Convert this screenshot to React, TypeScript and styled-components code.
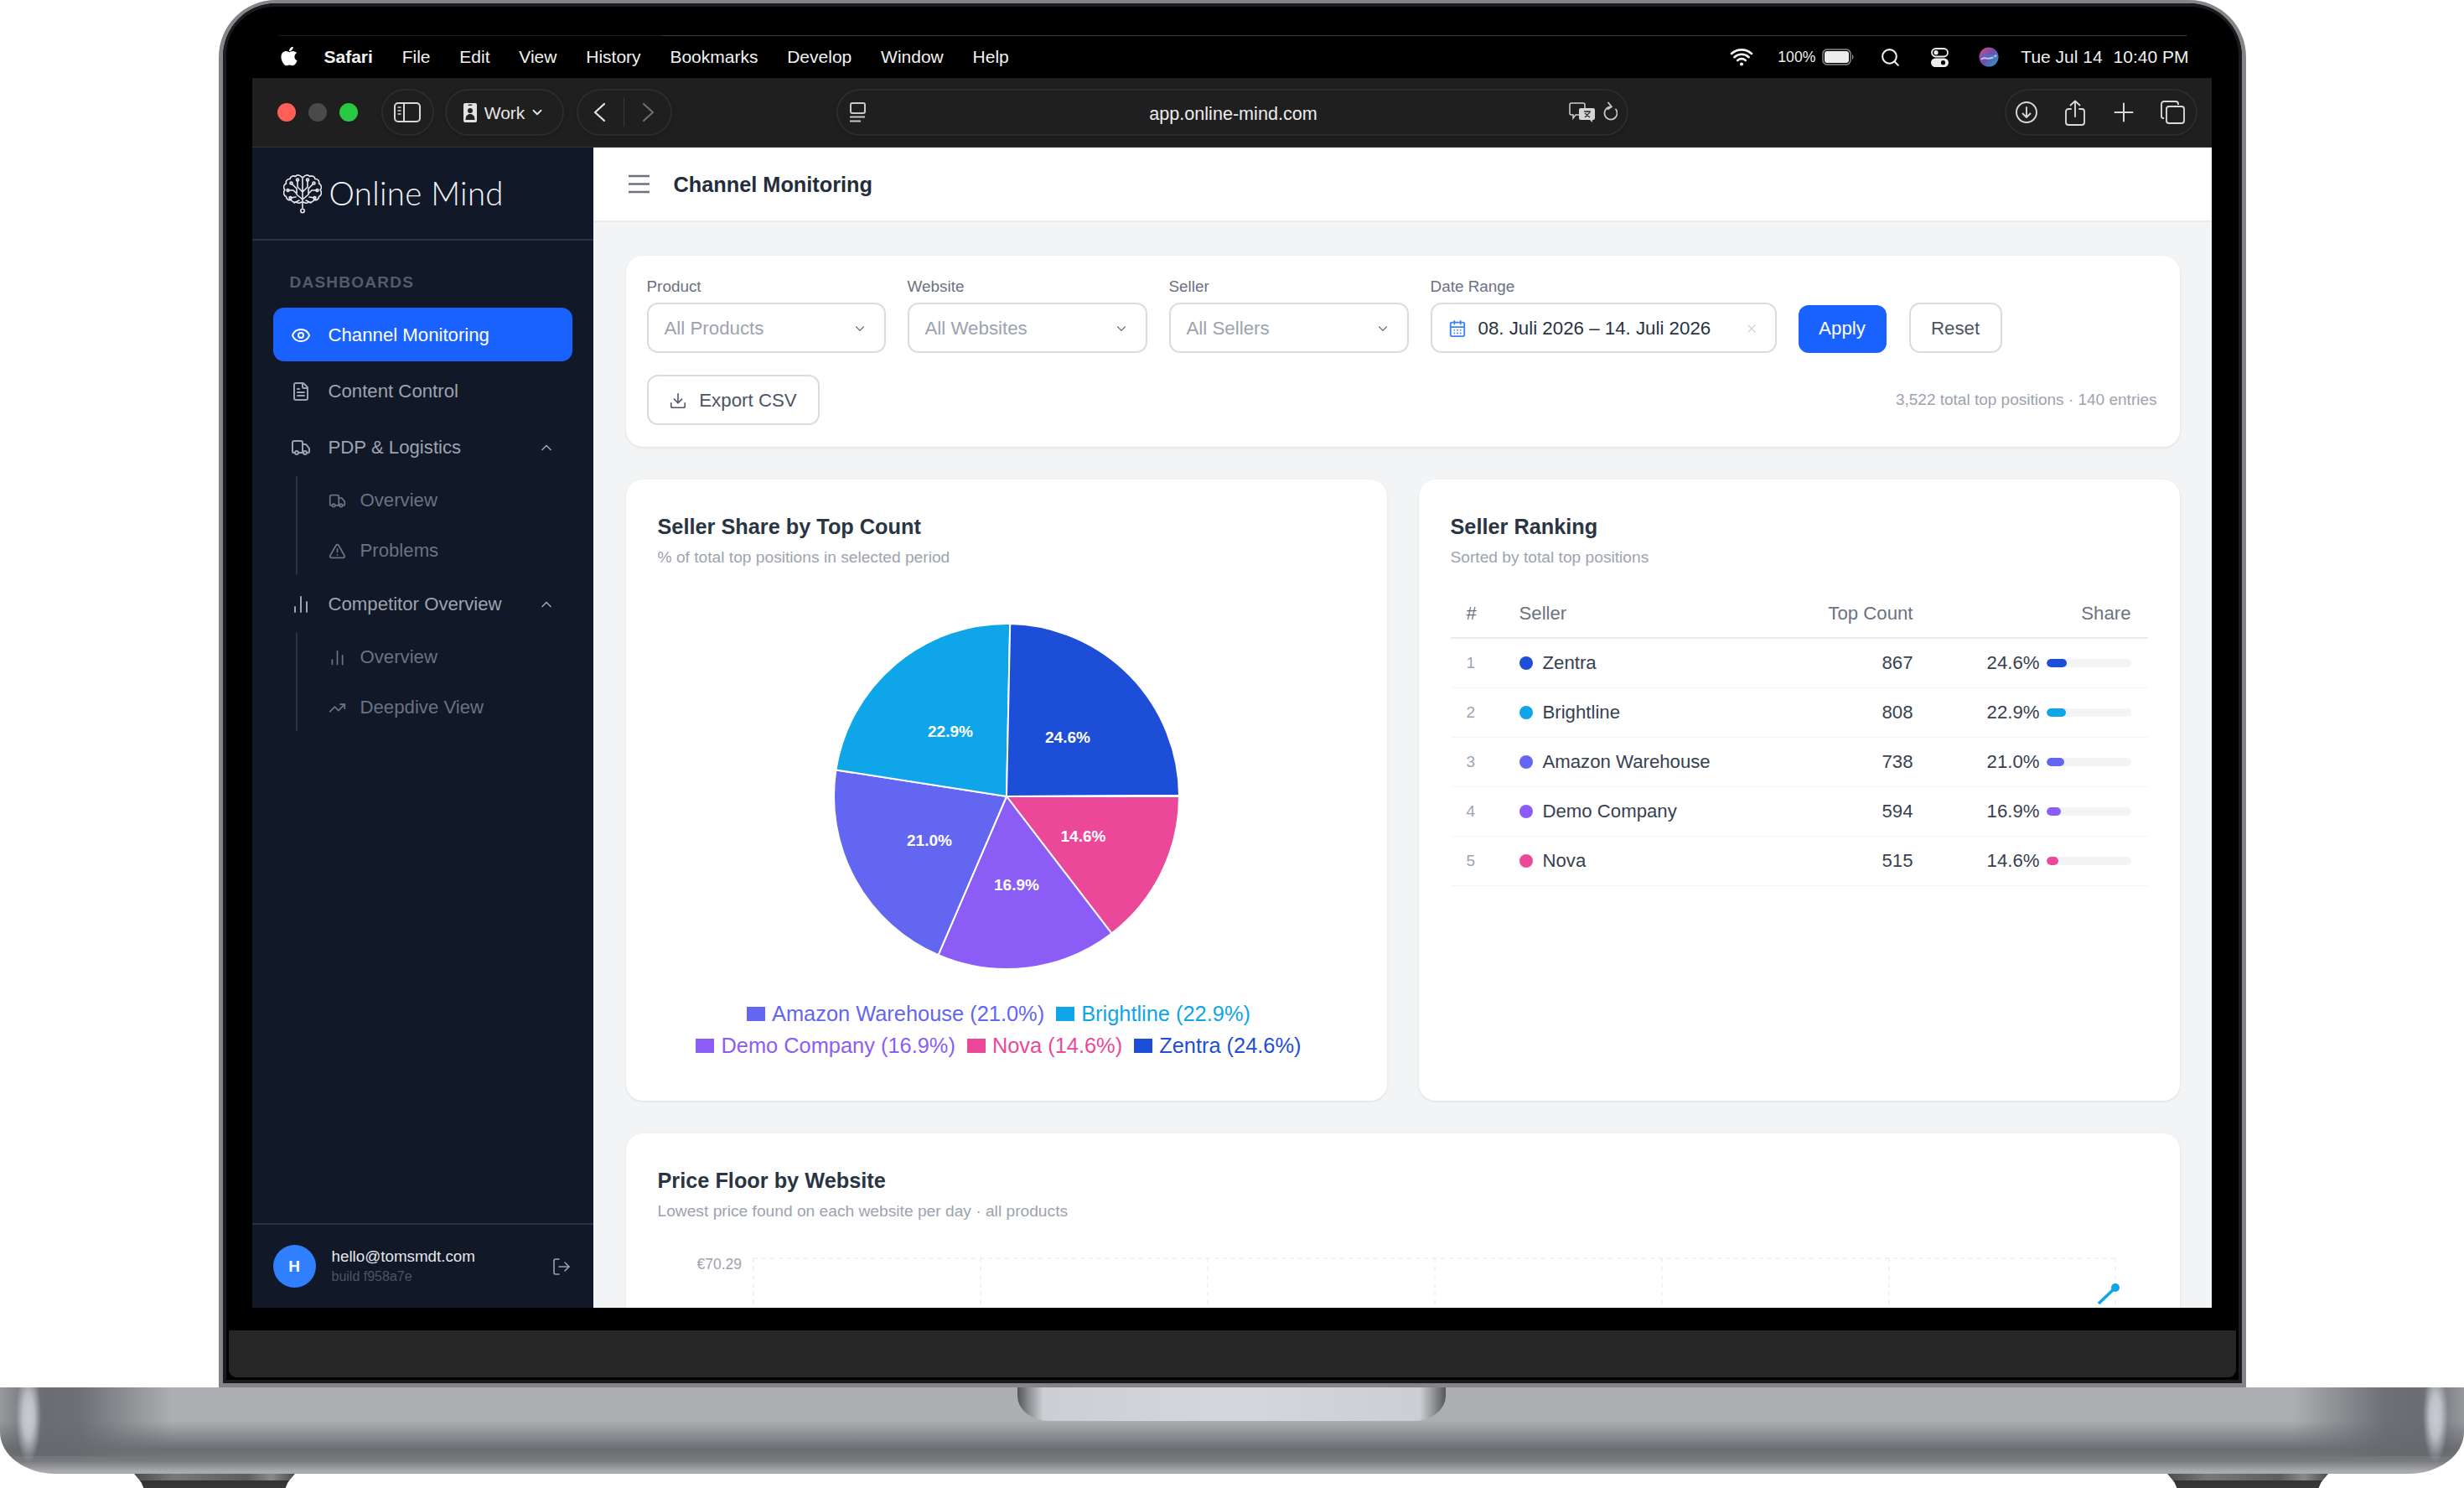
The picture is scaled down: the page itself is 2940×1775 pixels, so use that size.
import React from "react";
import styled, { createGlobalStyle } from "styled-components";
import {
  Eye, FileText, Truck, TriangleAlert, ChartNoAxesColumn, TrendingUp, ChevronUp, ChevronDown,
  LogOut, Download, X, CalendarDays, Search,
} from "lucide-react";
import { FaApple } from "react-icons/fa";
import { IoWifi } from "react-icons/io5";

const Global = createGlobalStyle`
  html, body { margin: 0; padding: 0; background: #fff; overflow: hidden; }
  * { box-sizing: border-box; }
  body { font-family: "Liberation Sans", Arial, sans-serif; }
`;

const Page = styled.div`
  width: 2940px; height: 1775px; display: flex; flex-direction: column; align-items: center; background: #fff;
`;
const Lid = styled.div`
  width: 2419px; height: 1655px; flex: none;
  background: #000;
  border: solid #858587; border-width: 4px 5px 5px;
  border-radius: 68px 68px 0 0;
  padding: 0;
  overflow: hidden;
`;
const Bezel = styled.div`
  height: 100%; border: 4px solid #1a1a22; border-radius: 62px 62px 0 0; background: #000;
  display: flex; flex-direction: column;
`;
const MenuLine = styled.div`
  height: 1px; margin: 34px 62px 0; flex: none;
  background: linear-gradient(90deg, #1c1c1c 0, #1c1c1c 20%, #3d3d3d 20.2%, #3d3d3d 100%);
`;
const MenuBar = styled.div`
  height: 50px; flex: none; display: flex; align-items: center; padding: 0 59px 0 62px;
  color: #f2f2f2; font-size: 21px; 
`;
const AppleMark = styled.span`
  display: flex; color: #fff; margin-right: 29px; margin-top: -2px;
`;
const MenuItem = styled.span<{ $bold?: boolean }>`
  font-weight: ${p => (p.$bold ? 700 : 400)}; margin-right: 34.8px; white-space: nowrap;
`;
const StatusGroup = styled.div`
  margin-left: auto; display: flex; align-items: center;
`;
const StatusSlot = styled.span<{ $m?: number; $s?: number }>`
  display: flex; align-items: center; margin-left: ${p => p.$m ?? 0}px; font-size: ${p => p.$s ?? 21}px; white-space: nowrap; color: #f0f0f0;
`;
const Display = styled.div`
  height: 1467px; flex: none; margin: 0 32px 0 31px; display: flex; flex-direction: column; overflow: hidden;
`;
const Toolbar = styled.div`
  height: 83px; flex: none; background: #1f1f1f; display: flex; align-items: center; padding: 0 17px 0 30px;
  color: #d6d6d6; border-bottom: 1px solid #333;
`;
const Light = styled.span<{ $c: string }>`
  width: 22px; height: 22px; border-radius: 50%; background: ${p => p.$c}; margin-right: 15px; flex: none;
`;
const Pill = styled.div<{ $w: number; $ml: number }>`
  width: ${p => p.$w}px; height: 56px; flex: none; margin-left: ${p => p.$ml}px;
  border: 2px solid #2c2c2c; border-radius: 28px; display: flex; align-items: center; justify-content: center;
  box-shadow: 0 2px 4px rgba(0,0,0,.18);
`;
const WorkLabel = styled.span`
  font-size: 21px; color: #e5e5e5; margin: 2px 6px 0 9px;
`;
const NavSplit = styled.span`
  width: 1px; height: 34px; background: #3a3a3a; margin: 0 21px;
`;
const UrlPill = styled(Pill)`
  display: grid; grid-template-columns: 1fr auto 1fr; padding: 0 11px 0 14px;
`;
const UrlText = styled.span`
  font-size: 21.6px; color: #ececec; padding-top: 3px;
`;
const UrlRight = styled.span`
  display: flex; justify-content: flex-end; align-items: center; gap: 8px;
`;
const RightPill = styled(Pill)`
  margin-left: auto; padding-right: 3px;
`;
const ToolSlot = styled.span`
  width: 58px; flex: none; display: flex; justify-content: center;
`;
const AppArea = styled.div`
  flex: 1; display: flex; min-height: 0;
`;
const Sidebar = styled.aside`
  width: 407px; flex: none; background: #111827; display: flex; flex-direction: column;
`;
const LogoBar = styled.div`
  height: 111px; flex: none; border-bottom: 2px solid #263245; display: flex; align-items: center; padding: 0 0 0 37px; gap: 9px;
`;
const LogoText = styled.span`
  font-family: "Lato", sans-serif; font-weight: 300; font-size: 38.4px; color: #f3f4f6; letter-spacing: .3px; margin-top: -1px;
`;
const Nav = styled.nav`
  padding: 38px 25px 0; display: flex; flex-direction: column; gap: 3px;
`;
const SectionLabel = styled.div`
  font-size: 19px; line-height: 24px; font-weight: 700; letter-spacing: 1.25px; color: #525c6b; padding-left: 20px; margin-bottom: 15px;
`;
const NavItem = styled.div<{ $active?: boolean }>`
  height: 64px; display: flex; align-items: center; gap: 21px; padding: 2px 21px 0; border-radius: 13px; font-size: 22.2px;
  color: ${p => (p.$active ? "#fff" : "#9ca3af")}; background: ${p => (p.$active ? "#1a62ff" : "transparent")};
`;
const NavLabel = styled.span`
  flex: 1; white-space: nowrap;
`;
const SubGroup = styled.div`
  margin-left: 27px; border-left: 2px solid #293343; display: flex; flex-direction: column; gap: 3px;
`;
const SubItem = styled.div`
  height: 57px; display: flex; align-items: center; gap: 17px; padding: 1px 0 0 37px; color: #6b7280; font-size: 22.2px;
`;
const SideFooter = styled.div`
  margin-top: auto; height: 101px; flex: none; border-top: 2px solid #263245; display: flex; align-items: center; padding: 0 26px 0 25px; gap: 19px;
`;
const Avatar = styled.div`
  width: 51px; height: 51px; border-radius: 50%; background: #2f7fff; color: #fff; font-weight: 700; font-size: 19px;
  display: flex; align-items: center; justify-content: center; flex: none;
`;
const UserBlock = styled.div`
  flex: 1; display: flex; flex-direction: column; gap: 3px; margin-top: -2px;
`;
const Email = styled.span`
  font-size: 18.8px; line-height: 23px; color: #e5e7eb;
`;
const Build = styled.span`
  font-size: 16px; line-height: 20px; color: #4b5563;
`;
const LogoutIcon = styled.span`
  display: flex; color: #9ca3af;
`;
const Main = styled.main`
  flex: 1; min-width: 0; background: #f3f4f6; display: flex; flex-direction: column; overflow: hidden;
`;
const Header = styled.header`
  height: 89px; flex: none; background: #fff; border-bottom: 2px solid #e9eaee; display: flex; align-items: center; padding: 0 0 0 42px; gap: 29px;
`;
const HeaderTitle = styled.h1`
  margin: 1px 0 0; font-size: 25.3px; font-weight: 700; color: #232d3b;
`;
const Content = styled.div`
  padding: 40px 38px 0 39px; display: flex; flex-direction: column; gap: 39px;
`;
const Card = styled.section`
  background: #fff; border-radius: 20px; box-shadow: 0 1px 3px rgba(0,0,0,.1);
`;
const FilterCard = styled(Card)`
  padding: 26px 27px 26px 25px; display: flex; flex-direction: column; gap: 26px; height: 228px; flex: none;
`;
const FilterRow = styled.div`
  display: flex; align-items: flex-end; gap: 26px;
`;
const Field = styled.label`
  display: flex; flex-direction: column; gap: 8px;
`;
const FieldLabel = styled.span`
  font-size: 18.9px; line-height: 22px; color: #6b7280;
`;
const SelectBox = styled.div<{ $w: number }>`
  width: ${p => p.$w}px; height: 60px; border: 2px solid #d8dbe0; border-radius: 13px; background: #fff;
  display: flex; align-items: center; padding: 2px 20px 0 19px; font-size: 22.3px; color: #9ca3af; gap: 14px;
`;
const SelectText = styled.span`
  flex: 1; white-space: nowrap;
`;
const DateText = styled(SelectText)`
  color: #283343;
`;
const ApplyButton = styled.button`
  width: 105px; height: 57px; border: 0; border-radius: 12px; background: #1a62ff; color: #fff; font: 400 22.3px "Liberation Sans", sans-serif; padding: 0 0 1px;
`;
const OutlineButton = styled.button<{ $w: number; $ml?: number }>`
  width: ${p => p.$w}px; height: 60px; border: 2px solid #d8dbe0; border-radius: 13px; background: #fff; color: #4b5563;
  margin-left: ${p => p.$ml ?? 0}px;
  font: 400 22.3px "Liberation Sans", sans-serif; padding: 1px 0 0; display: flex; align-items: center; justify-content: center; gap: 14px; flex: none;
`;
const ExportRow = styled.div`
  display: flex; align-items: center; justify-content: space-between;
`;
const Summary = styled.span`
  font-size: 19px; color: #9ca3af;
`;
const TwoCols = styled.div`
  display: grid; grid-template-columns: 908px 908px; column-gap: 38px; height: 741px; flex: none;
`;
const PadCard = styled(Card)`
  padding: 40px 38px 0;
`;
const CardTitle = styled.h2`
  margin: 0; font-size: 25.3px; line-height: 32px; font-weight: 700; color: #2a3544;
`;
const CardSub = styled.p`
  margin: 9px 0 0; font-size: 19.2px; line-height: 24px; color: #9ca3af;
`;
const PieSvg = styled.svg`
  display: block; margin: 65px auto 0;
`;
const Legend = styled.div`
  width: 760px; margin: 32px 0 0 27px; display: flex; flex-wrap: wrap; justify-content: center; column-gap: 14px; line-height: 38px;
`;
const LegendItem = styled.span<{ $c: string }>`
  display: inline-flex; align-items: center; gap: 8px; font-size: 25.4px; color: ${p => p.$c}; white-space: nowrap;
`;
const LegendSwatch = styled.i<{ $c: string }>`
  width: 22px; height: 17px; background: ${p => p.$c}; display: block;
`;
const RankTable = styled.div`
  margin-top: 26px; display: flex; flex-direction: column;
`;
const RankRow = styled.div<{ $head?: boolean }>`
  display: grid; grid-template-columns: 82px 340px 130px 280px; align-items: center;
  height: 59px;
  border-bottom: ${p => (p.$head ? "2px solid #e9eaee" : "1px solid #f3f4f6")};
  font-size: 22.2px; color: ${p => (p.$head ? "#6b7280" : "#374151")};
`;
const RankNum = styled.span`
  padding-left: 19px; font-size: 19px; color: #9ca3af;
`;
const HeadHash = styled.span`
  padding-left: 19px;
`;
const SellerCell = styled.span`
  display: flex; align-items: center; gap: 12px;
`;
const Dot = styled.i<{ $c: string }>`
  width: 16px; height: 16px; border-radius: 50%; background: ${p => p.$c}; display: block;
`;
const RightCell = styled.span`
  text-align: right;
`;
const ShareCell = styled.span`
  display: flex; align-items: center; justify-content: flex-end; gap: 8px; padding-right: 20px;
`;
const BarTrack = styled.span`
  width: 101px; height: 10px; border-radius: 5px; background: #f3f4f6; display: block; overflow: hidden;
`;
const BarFill = styled.span<{ $c: string }>`
  display: block; height: 100%; border-radius: 5px; background: ${p => p.$c};
`;
const WideCard = styled(PadCard)`
  height: 500px; flex: none;
`;
const LineSvg = styled.svg`
  display: block; margin-top: 30px;
`;
const BottomGap = styled.div`
  height: 27px; flex: none;
`;
const Hinge = styled.div`
  height: 56px; flex: none; margin: 0 3px; background: #262626; border-radius: 0 0 9px 9px;
`;
const Base = styled.div`
  width: 2940px; height: 103px; flex: none; position: relative; border-radius: 0 0 66px 66px / 0 0 50px 50px;
  background:
    radial-gradient(ellipse 15px 56px at 34px 34px, #c9ccd4 0, rgba(201,204,212,.85) 45%, rgba(201,204,212,0) 100%),
    radial-gradient(ellipse 15px 56px at 2906px 34px, #c9ccd4 0, rgba(201,204,212,.85) 45%, rgba(201,204,212,0) 100%),
    linear-gradient(90deg, rgba(112,113,118,.35) 0, rgba(100,101,106,.7) 30px, rgba(104,105,110,.95) 54px, rgba(104,105,110,.9) 95px, rgba(110,111,116,.5) 150px, rgba(173,174,178,0) 205px) left top / 205px 82px no-repeat,
    linear-gradient(270deg, rgba(112,113,118,.35) 0, rgba(100,101,106,.7) 30px, rgba(104,105,110,.95) 54px, rgba(104,105,110,.9) 95px, rgba(110,111,116,.5) 150px, rgba(173,174,178,0) 205px) right top / 205px 82px no-repeat,
    linear-gradient(180deg, #adaeb2 0, #adaeb2 40px, #6c6d72 74px, #7a7b7f 88px, #a9aaae 100px);
`;
const Notch = styled.div`
  position: absolute; top: 0; left: 1214px; width: 511px; height: 40px; border-radius: 0 0 38px 38px / 0 0 30px 30px;
  background: linear-gradient(90deg, #55565a 0, #8a8b8f 2.5%, #cdced3 6%, #d6d7dc 50%, #cdced3 94%, #8a8b8f 97.5%, #55565a 100%);
`;
const Feet = styled.div`
  width: 2940px; height: 17px; flex: none; display: flex; justify-content: space-between; padding: 0 162px 0 160px;
`;
const Foot = styled.div`
  width: 192px; height: 17px;
  clip-path: polygon(0 0, 100% 0, 95.5% 60%, 94% 100%, 6% 100%, 4.5% 60%);
  background:
    linear-gradient(180deg, transparent 0, transparent 8px, #333 8px, #3a3a3a 100%),
    linear-gradient(90deg, #4d4d4f 0, #77787a 25%, #5c5d5f 70%, #88898b 85%, #4d4d4f 100%);
`;

const sellers = [
  { name: "Zentra", top: 867, share: 24.6, c: "#1d4ed8" },
  { name: "Brightline", top: 808, share: 22.9, c: "#0ea5e9" },
  { name: "Amazon Warehouse", top: 738, share: 21.0, c: "#6366f1" },
  { name: "Demo Company", top: 594, share: 16.9, c: "#8b5cf6" },
  { name: "Nova", top: 515, share: 14.6, c: "#ec4899" },
];
const legendOrder = [2, 1, 3, 4, 0];

const pieSlices = [
  { key: "Nova", c: "#ec4899", pct: 14.6, lab: [91.5, 47] },
  { key: "Demo", c: "#8b5cf6", pct: 16.9, lab: [12, 105] },
  { key: "Amazon", c: "#6366f1", pct: 21.0, lab: [-92, 52] },
  { key: "Brightline", c: "#0ea5e9", pct: 22.9, lab: [-67, -78] },
  { key: "Zentra", c: "#1d4ed8", pct: 24.6, lab: [73, -71] },
];

function Pie() {
  const R = 206;
  const C = 208;
  let angle = 90;
  const pt = (a: number) => {
    const rad = (a * Math.PI) / 180;
    return [C + R * Math.sin(rad), C - R * Math.cos(rad)];
  };
  return (
    <PieSvg width={416} height={416} viewBox="0 0 416 416">
      {pieSlices.map(s => {
        const start = angle;
        const end = angle + (s.pct / 100.1) * 360;
        angle = end;
        const [x1, y1] = pt(start);
        const [x2, y2] = pt(end);
        return (
          <path key={s.key} d={`M${C} ${C}L${x1} ${y1}A${R} ${R} 0 ${end - start > 180 ? 1 : 0} 1 ${x2} ${y2}Z`} fill={s.c} stroke="#fff" strokeWidth={2} />
        );
      })}
      {pieSlices.map(s => (
        <text key={s.key + "t"} x={C + s.lab[0]} y={C + s.lab[1] + 7} textAnchor="middle" fill="#fff" fontSize={19} fontWeight={700} fontFamily="Liberation Sans, sans-serif">
          {s.pct.toFixed(1)}%
        </text>
      ))}
    </PieSvg>
  );
}

function BrainLogo() {
  return (
    <svg width="46" height="48" viewBox="0 0 46 48" fill="none" stroke="#e8eaee" strokeWidth="1.6" strokeLinecap="round" strokeLinejoin="round">
      <path d="M22 4.500c-1.500-3-5.500-3.500-7.500-1-2.500-1.500-6 0-6.500 3-3-.5-5.500 2.500-4.500 5.500-3 1-4 5-1.500 7.500-2.500 2.500-1.500 7 1.500 8 0 3 3 5 6 4 1 2.500 4 3.500 6 2.500 1.500 1.500 4 1.500 6.500 0" />
      <path d="M24 4.500c1.500-3 5.500-3.500 7.500-1 2.500-1.500 6 0 6.500 3 3-.5 5.500 2.500 4.500 5.500 3 1 4 5 1.500 7.500 2.500 2.500 1.500 7-1.500 8 0 3-3 5-6 4-1 2.500-4 3.500-6 2.500-1.500 1.500-4 1.500-6.500 0" />
      <path d="M23 4v37M17 8v8l6 6M29 8v8l-6 6M10 12l6 6v7l7 6M36 12l-6 6v7l-7 6M6 20h6l4 4M40 20h-6l-4 4M9 29l6-1M37 29l-6-1M13 35l6-3M33 35l-6-3" />
      <circle cx="17" cy="7.500" r="1.500" /><circle cx="29" cy="7.500" r="1.500" /><circle cx="9.500" cy="11.500" r="1.500" /><circle cx="36.500" cy="11.500" r="1.500" />
      <circle cx="5.500" cy="20" r="1.400" /><circle cx="40.500" cy="20" r="1.400" /><circle cx="8.500" cy="29" r="1.400" /><circle cx="37.500" cy="29" r="1.400" /><circle cx="23" cy="44.500" r="2.200" />
    </svg>
  );
}

function Battery() {
  return (
    <svg width="38" height="20" viewBox="0 0 38 20" fill="none">
      <rect x="1" y="1" width="33" height="18" rx="5" stroke="#8d8d8d" strokeWidth="1.500" />
      <rect x="3" y="3" width="29" height="14" rx="3" fill="#ededed" />
      <path d="M36 7c1 .5 1.500 1.500 1.500 3s-.5 2.500-1.500 3z" fill="#8d8d8d" />
    </svg>
  );
}
function ControlCenter() {
  return (
    <svg width="21" height="23" viewBox="0 0 21 23" fill="none">
      <rect x="1" y="1" width="19" height="9.500" rx="4.700" stroke="#eee" strokeWidth="1.800" />
      <circle cx="6" cy="5.700" r="2.600" fill="#eee" />
      <rect x="0" y="12.500" width="21" height="10.500" rx="5.200" fill="#eee" />
      <circle cx="14.500" cy="17.700" r="2.600" fill="#000" />
    </svg>
  );
}
function Siri() {
  return (
    <svg width="24" height="24" viewBox="0 0 24 24">
      <defs>
        <linearGradient id="siriA" x1="0" y1="0" x2="1" y2="1">
          <stop offset="0" stopColor="#d94b8c" /><stop offset=".5" stopColor="#6a4fb0" /><stop offset="1" stopColor="#2aa6c9" />
        </linearGradient>
      </defs>
      <circle cx="12" cy="12" r="11.500" fill="url(#siriA)" />
      <path d="M3 15c4-5 8 3 18-5" stroke="#d6e6f2" strokeWidth="2" fill="none" opacity=".8" />
      <path d="M3 9c5 5 10-4 18 6" stroke="#2d7fd0" strokeWidth="2" fill="none" opacity=".8" />
    </svg>
  );
}
function SidebarToggle() {
  return (
    <svg width="32" height="24" viewBox="0 0 32 24" fill="none" stroke="#d8d8d8" strokeWidth="2">
      <rect x="1" y="1" width="30" height="22" rx="4" />
      <path d="M12 1v22" />
      <path d="M4.500 6h4M4.500 10h4M4.500 14h4" strokeWidth="1.600" />
    </svg>
  );
}
function WorkBadge() {
  return (
    <svg width="16" height="23" viewBox="0 0 16 23">
      <rect width="16" height="23" rx="2" fill="#e3e3e3" />
      <rect x="5.500" y="1.500" width="5" height="1.600" rx=".8" fill="#333" />
      <circle cx="8" cy="9" r="3" fill="#222" />
      <path d="M2.500 20c0-5 2.500-7 5.500-7s5.500 2 5.500 7z" fill="#222" />
    </svg>
  );
}
function Chevron({ dir, dim }: { dir: "l" | "r"; dim?: boolean }) {
  return (
    <svg width="15" height="24" viewBox="0 0 15 24" fill="none" stroke={dim ? "#6e6e6e" : "#e6e6e6"} strokeWidth="2.200" strokeLinecap="round" strokeLinejoin="round">
      <path d={dir === "l" ? "M13 2L2 12l11 10" : "M2 2l11 10L2 22"} />
    </svg>
  );
}
function PageMenu() {
  return (
    <svg width="19" height="24" viewBox="0 0 19 24" fill="none" stroke="#c8c8c8" strokeWidth="2">
      <rect x="1" y="1" width="17" height="12" rx="2" />
      <path d="M0 17.500h18M0 22.500h13" />
    </svg>
  );
}
function TranslateIcon() {
  return (
    <svg width="32" height="24" viewBox="0 0 32 24" fill="none">
      <path d="M3 1h14a2 2 0 0 1 2 2v10a2 2 0 0 1-2 2H8l-3 4v-4H3a2 2 0 0 1-2-2V3a2 2 0 0 1 2-2z" stroke="#cfcfcf" strokeWidth="1.500" />
      <path d="M14 7h15a2 2 0 0 1 2 2v10a2 2 0 0 1-2 2h-1v3l-3-3H14a2 2 0 0 1-2-2V9a2 2 0 0 1 2-2z" fill="#d6d6d6" />
      <path d="M18 11h8M22 10v2M19 18l6-6M19 13l6 5" stroke="#333" strokeWidth="1.400" />
    </svg>
  );
}
function ReloadIcon() {
  return (
    <svg width="18" height="26" viewBox="0 0 18 26" fill="none" stroke="#c8c8c8" strokeWidth="1.800" strokeLinecap="round" strokeLinejoin="round">
      <path d="M10 6.500a7.500 7.500 0 1 0 6 3" />
      <path d="M7 1.500l4 4.800-4.500 3" />
    </svg>
  );
}
function DownloadCircle() {
  return (
    <svg width="26" height="26" viewBox="0 0 26 26" fill="none" stroke="#d8d8d8" strokeWidth="1.900" strokeLinecap="round" strokeLinejoin="round">
      <circle cx="13" cy="13" r="12" />
      <path d="M13 7v12M8.500 14.500L13 19l4.500-4.500" />
    </svg>
  );
}
function ShareIcon() {
  return (
    <svg width="24" height="31" viewBox="0 0 24 31" fill="none" stroke="#d8d8d8" strokeWidth="1.900" strokeLinecap="round" strokeLinejoin="round">
      <path d="M7 11H4a3 3 0 0 0-3 3v13a3 3 0 0 0 3 3h16a3 3 0 0 0 3-3V14a3 3 0 0 0-3-3h-3" />
      <path d="M12 20V1.500M6.500 6.500L12 1.500l5.500 5" />
    </svg>
  );
}
function PlusIcon() {
  return (
    <svg width="24" height="24" viewBox="0 0 24 24" fill="none" stroke="#d8d8d8" strokeWidth="2" strokeLinecap="round">
      <path d="M12 1.500v21M1.500 12h21" />
    </svg>
  );
}
function TabsIcon() {
  return (
    <svg width="29" height="28" viewBox="0 0 29 28" fill="none" stroke="#d8d8d8" strokeWidth="1.900">
      <rect x="7" y="7" width="21" height="20" rx="3" />
      <path d="M4 21H3a2 2 0 0 1-2-2V4a3 3 0 0 1 3-3h14a3 3 0 0 1 3 3v1" />
    </svg>
  );
}
function MenuBars() {
  return (
    <svg width="25" height="23" viewBox="0 0 25 23" fill="none" stroke="#6b7280" strokeWidth="2.400">
      <path d="M0 2h25M0 11.500h25M0 21h25" />
    </svg>
  );
}

function PriceChart() {
  const xs = [114, 385, 656, 927, 1198, 1469, 1739];
  return (
    <LineSvg width={1778} height={120} viewBox="0 0 1778 120">
      <g stroke="#eff0f3" strokeWidth="1.500" strokeDasharray="5 5" fill="none">
        <path d="M114 14H1739" />
        {xs.map(x => <path key={x} d={`M${x} 14V120`} />)}
      </g>
      <text x="100" y="27" textAnchor="end" fontSize="17.5" fill="#9ca3af" fontFamily="Liberation Sans, sans-serif">€70.29</text>
      <path d="M1719 68L1739 49" stroke="#0ea5e9" strokeWidth="3.500" fill="none" />
      <circle cx="1739" cy="49" r="5" fill="#0ea5e9" />
    </LineSvg>
  );
}

export default function App() {
  return (
    <Page>
      <Global />
      <Lid>
        <Bezel>
          <MenuLine />
          <MenuBar>
            <AppleMark><FaApple size={26} /></AppleMark>
            <MenuItem $bold>Safari</MenuItem>
            <MenuItem>File</MenuItem>
            <MenuItem>Edit</MenuItem>
            <MenuItem>View</MenuItem>
            <MenuItem>History</MenuItem>
            <MenuItem>Bookmarks</MenuItem>
            <MenuItem>Develop</MenuItem>
            <MenuItem>Window</MenuItem>
            <MenuItem>Help</MenuItem>
            <StatusGroup>
              <StatusSlot><IoWifi size={32} color="#f4f4f4" /></StatusSlot>
              <StatusSlot $m={27} $s={17.6}>100%</StatusSlot>
              <StatusSlot $m={8}><Battery /></StatusSlot>
              <StatusSlot $m={31}><Search size={25} strokeWidth={2} /></StatusSlot>
              <StatusSlot $m={36}><ControlCenter /></StatusSlot>
              <StatusSlot $m={36}><Siri /></StatusSlot>
              <StatusSlot $m={26}>Tue Jul 14</StatusSlot>
              <StatusSlot $m={13}>10:40 PM</StatusSlot>
            </StatusGroup>
          </MenuBar>
          <Display>
            <Toolbar>
              <Light $c="#ff5f57" />
              <Light $c="#4a4a4a" />
              <Light $c="#28c840" />
              <Pill $w={63} $ml={13}><SidebarToggle /></Pill>
              <Pill $w={142} $ml={13}><WorkBadge /><WorkLabel>Work</WorkLabel><ChevronDown size={18} color="#e5e5e5" strokeWidth={2.4} /></Pill>
              <Pill $w={114} $ml={15}><Chevron dir="l" /><NavSplit /><Chevron dir="r" dim /></Pill>
              <UrlPill $w={945} $ml={196}>
                <PageMenu />
                <UrlText>app.online-mind.com</UrlText>
                <UrlRight><TranslateIcon /><ReloadIcon /></UrlRight>
              </UrlPill>
              <RightPill $w={230} $ml={0}>
                <ToolSlot><DownloadCircle /></ToolSlot>
                <ToolSlot><ShareIcon /></ToolSlot>
                <ToolSlot><PlusIcon /></ToolSlot>
                <ToolSlot><TabsIcon /></ToolSlot>
              </RightPill>
            </Toolbar>
            <AppArea>
              <Sidebar>
                <LogoBar><BrainLogo /><LogoText>Online Mind</LogoText></LogoBar>
                <Nav>
                  <SectionLabel>DASHBOARDS</SectionLabel>
                  <NavItem $active><Eye size={24} /><NavLabel>Channel Monitoring</NavLabel></NavItem>
                  <NavItem><FileText size={24} /><NavLabel>Content Control</NavLabel></NavItem>
                  <NavItem><Truck size={24} /><NavLabel>PDP &amp; Logistics</NavLabel><ChevronUp size={20} /></NavItem>
                  <SubGroup>
                    <SubItem><Truck size={21} />Overview</SubItem>
                    <SubItem><TriangleAlert size={21} />Problems</SubItem>
                  </SubGroup>
                  <NavItem><ChartNoAxesColumn size={24} /><NavLabel>Competitor Overview</NavLabel><ChevronUp size={20} /></NavItem>
                  <SubGroup>
                    <SubItem><ChartNoAxesColumn size={21} />Overview</SubItem>
                    <SubItem><TrendingUp size={21} />Deepdive View</SubItem>
                  </SubGroup>
                </Nav>
                <SideFooter>
                  <Avatar>H</Avatar>
                  <UserBlock><Email>hello@tomsmdt.com</Email><Build>build f958a7e</Build></UserBlock>
                  <LogoutIcon><LogOut size={24} strokeWidth={1.6} /></LogoutIcon>
                </SideFooter>
              </Sidebar>
              <Main>
                <Header><MenuBars /><HeaderTitle>Channel Monitoring</HeaderTitle></Header>
                <Content>
                  <FilterCard>
                    <FilterRow>
                      <Field><FieldLabel>Product</FieldLabel><SelectBox $w={285}><SelectText>All Products</SelectText><ChevronDown size={18} strokeWidth={1.6} color="#6b7280" /></SelectBox></Field>
                      <Field><FieldLabel>Website</FieldLabel><SelectBox $w={286}><SelectText>All Websites</SelectText><ChevronDown size={18} strokeWidth={1.6} color="#6b7280" /></SelectBox></Field>
                      <Field><FieldLabel>Seller</FieldLabel><SelectBox $w={286}><SelectText>All Sellers</SelectText><ChevronDown size={18} strokeWidth={1.6} color="#6b7280" /></SelectBox></Field>
                      <Field><FieldLabel>Date Range</FieldLabel><SelectBox $w={413}><CalendarDays size={22} color="#3b82f6" strokeWidth={2} /><DateText>08. Juli 2026 – 14. Juli 2026</DateText><X size={16} color="#d1d5db" /></SelectBox></Field>
                      <ApplyButton>Apply</ApplyButton>
                      <OutlineButton $w={111} $ml={1}>Reset</OutlineButton>
                    </FilterRow>
                    <ExportRow>
                      <OutlineButton $w={206}><Download size={22} strokeWidth={1.7} />Export CSV</OutlineButton>
                      <Summary>3,522 total top positions · 140 entries</Summary>
                    </ExportRow>
                  </FilterCard>
                  <TwoCols>
                    <PadCard>
                      <CardTitle>Seller Share by Top Count</CardTitle>
                      <CardSub>% of total top positions in selected period</CardSub>
                      <Pie />
                      <Legend>
                        {legendOrder.map(i => (
                          <LegendItem key={i} $c={sellers[i].c}><LegendSwatch $c={sellers[i].c} />{sellers[i].name} ({sellers[i].share.toFixed(1)}%)</LegendItem>
                        ))}
                      </Legend>
                    </PadCard>
                    <PadCard>
                      <CardTitle>Seller Ranking</CardTitle>
                      <CardSub>Sorted by total top positions</CardSub>
                      <RankTable>
                        <RankRow $head>
                          <HeadHash>#</HeadHash><span>Seller</span><RightCell>Top Count</RightCell><ShareCell>Share</ShareCell>
                        </RankRow>
                        {sellers.map((s, i) => (
                          <RankRow key={s.name}>
                            <RankNum>{i + 1}</RankNum>
                            <SellerCell><Dot $c={s.c} />{s.name}</SellerCell>
                            <RightCell>{s.top}</RightCell>
                            <ShareCell>{s.share.toFixed(1)}%<BarTrack><BarFill $c={s.c} style={{ width: `${s.share}%` }} /></BarTrack></ShareCell>
                          </RankRow>
                        ))}
                      </RankTable>
                    </PadCard>
                  </TwoCols>
                  <WideCard>
                    <CardTitle>Price Floor by Website</CardTitle>
                    <CardSub>Lowest price found on each website per day · all products</CardSub>
                    <PriceChart />
                  </WideCard>
                </Content>
              </Main>
            </AppArea>
          </Display>
          <BottomGap />
          <Hinge />
        </Bezel>
      </Lid>
      <Base><Notch /></Base>
      <Feet><Foot /><Foot /></Feet>
    </Page>
  );
}
